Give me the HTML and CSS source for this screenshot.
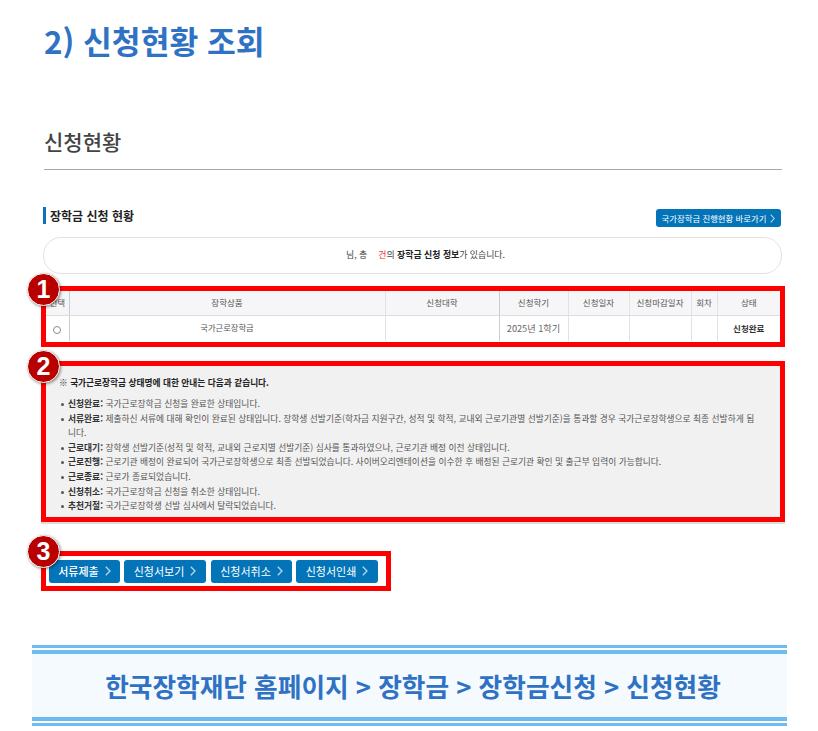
FILE: index.html
```html
<!DOCTYPE html>
<html lang="ko">
<head>
<meta charset="utf-8">
<title>신청현황 조회</title>
<link rel="stylesheet" href="styles.css">
</head>
<body>
<div class="page">
  <h1 class="title">2) 신청현황 조회</h1>
  <h2 class="heading">신청현황</h2>
  <div class="section-head">
    <h3 class="section-title">장학금 신청 현황</h3>
    <a class="btn btn-small">국가장학금 진행현황 바로가기<svg class="chev" width="5" height="9" viewBox="0 0 5 9"><path d="M.7.7 4.2 4.5.7 8.3" fill="none" stroke="#b9d7ee" stroke-width="1.1"/></svg></a>
  </div>
  <div class="notice"><span>님, 총</span><span class="red">건</span><span>의 <b>장학금 신청 정보</b>가 있습니다.</span></div>

  <div class="frame table-frame">
    <span class="badge badge-one">1</span>
    <table class="grid">
      <colgroup>
        <col class="c1"><col class="c2"><col class="c3"><col class="c4"><col class="c5"><col class="c6"><col class="c7"><col class="c8">
      </colgroup>
      <thead>
        <tr><th>선택</th><th>장학상품</th><th>신청대학</th><th>신청학기</th><th>신청일자</th><th>신청마감일자</th><th>회차</th><th>상태</th></tr>
      </thead>
      <tbody>
        <tr><td><span class="radio"></span></td><td class="up">국가근로장학금</td><td></td><td class="term">2025년 1학기</td><td></td><td></td><td></td><td class="strong">신청완료</td></tr>
      </tbody>
    </table>
  </div>

  <div class="frame info-frame">
    <span class="badge badge-two">2</span>
    <p class="info-lead">※ <b>국가근로장학금 상태명에 대한 안내는 다음과 같습니다.</b></p>
    <ul class="info-list">
      <li><b>신청완료:</b> 국가근로장학금 신청을 완료한 상태입니다.</li>
      <li><b>서류완료:</b> 제출하신 서류에 대해 확인이 완료된 상태입니다. 장학생 선발기준(학자금 지원구간, 성적 및 학적, 교내외 근로기관별 선발기준)을 통과할 경우 국가근로장학생으로 최종 선발하게 됩니다.</li>
      <li><b>근로대기:</b> 장학생 선발기준(성적 및 학적, 교내외 근로지별 선발기준) 심사를 통과하였으나, 근로기관 배정 이전 상태입니다.</li>
      <li><b>근로진행:</b> 근로기관 배정이 완료되어 국가근로장학생으로 최종 선발되었습니다. 사이버오리엔테이션을 이수한 후 배정된 근로기관 확인 및 출근부 입력이 가능합니다.</li>
      <li><b>근로종료:</b> 근로가 종료되었습니다.</li>
      <li><b>신청취소:</b> 국가근로장학금 신청을 취소한 상태입니다.</li>
      <li><b>추천거절:</b> 국가근로장학생 선발 심사에서 탈락되었습니다.</li>
    </ul>
  </div>

  <div class="frame btn-frame">
    <span class="badge badge-three">3</span>
    <a class="btn btn-big btn-first">서류제출<svg class="chev" width="6" height="10" viewBox="0 0 6 10"><path d="M.8.8 5 5 .8 9.2" fill="none" stroke="#b9d7ee" stroke-width="1.3"/></svg></a>
    <a class="btn btn-big btn-wide">신청서보기<svg class="chev" width="6" height="10" viewBox="0 0 6 10"><path d="M.8.8 5 5 .8 9.2" fill="none" stroke="#b9d7ee" stroke-width="1.3"/></svg></a>
    <a class="btn btn-big btn-mid">신청서취소<svg class="chev" width="6" height="10" viewBox="0 0 6 10"><path d="M.8.8 5 5 .8 9.2" fill="none" stroke="#b9d7ee" stroke-width="1.3"/></svg></a>
    <a class="btn btn-big btn-wide">신청서인쇄<svg class="chev" width="6" height="10" viewBox="0 0 6 10"><path d="M.8.8 5 5 .8 9.2" fill="none" stroke="#b9d7ee" stroke-width="1.3"/></svg></a>
  </div>

  <div class="banner">
    <div class="banner-inner">한국장학재단 홈페이지 &gt; 장학금 &gt; 장학금신청 &gt; 신청현황</div>
  </div>
</div>
</body>
</html>
```

FILE: styles.css
```css
* { box-sizing: border-box; }
html, body { margin: 0; padding: 0; background: #fff; }
body { font-family: "Noto Sans CJK KR", "Noto Sans", sans-serif; color: #333; }
.page { width: 818px; height: 731px; padding: 20px 0 0 41px; overflow: hidden; }

.title { margin: 0 0 0 3px; font-size: 31.3px; line-height: 42px; font-weight: 700; color: #2f72c4; }
.heading { margin: 59px 0 0 3px; width: 738px; height: 49px; font-size: 21px; line-height: 40px; font-weight: 500; color: #444; border-bottom: 1px solid #a9a9a9; }

.section-head { display: flex; justify-content: space-between; align-items: flex-start; width: 738px; margin: 37px 0 0 2px; height: 30px; }
.section-title { margin: 0; height: 17px; padding-left: 4px; border-left: 3px solid #0f72b8; font-size: 12px; line-height: 17px; font-weight: 700; color: #222; }

.btn { display: inline-flex; align-items: center; background: #0474b9; color: #fff; border-radius: 3px; white-space: nowrap; }
.btn-small { width: 125px; height: 18px; margin-top: 2px; font-size: 8.4px; justify-content: center; gap: 4px; }

.notice { display: flex; justify-content: center; align-items: center; width: 739px; height: 37px; margin-left: 2px; padding: 0 0 3px 26px; border: 1px solid #e2e2e2; border-radius: 18px; font-size: 8.9px; color: #444; }
.notice span { display: inline-block; }
.notice b { color: #222; }
.notice .red { color: #e33; margin-left: 11px; }

.frame { position: relative; width: 744px; border: 5px solid #f00; }
.badge { position: absolute; left: -19px; width: 33px; height: 33px; border-radius: 50%; background: #b80000; border: 1px solid #fff; box-shadow: 1px 1px 3px rgba(0,0,0,.45); color: #fff; font: 700 25px/31px "Liberation Sans", sans-serif; text-align: center; }
.badge-one { top: -18px; }
.badge-two { top: -16px; }
.badge-three { top: -21px; }

.table-frame { height: 61px; margin-top: 12px; }
.grid { width: 734px; table-layout: fixed; border-collapse: collapse; font-size: 8.5px; color: #555; }
.c1 { width: 23px; } .c2 { width: 316px; } .c3 { width: 114px; } .c4 { width: 69px; }
.c5 { width: 61px; } .c6 { width: 62px; } .c7 { width: 26px; } .c8 { width: 63px; }
.grid th { height: 24px; padding: 0 0 2px; background: #f6f6f8; font-weight: 400; border-bottom: 1px solid #ddd; border-left: 1px solid #e2e2e2; overflow: hidden; white-space: nowrap; }
.grid td { height: 26px; padding: 0; text-align: center; border-left: 1px solid #e2e2e2; }
.grid th:first-child, .grid td:first-child { border-left: 0; }
.grid th:nth-child(2), .grid td:nth-child(2), .grid th:nth-child(4), .grid td:nth-child(4) { border-left: 1px solid #ccc; }
.up { vertical-align: top; padding-top: 5px !important; line-height: 12px; font-size: 8.3px; }
.term { font-size: 9.2px; color: #666; }
.strong { font-weight: 700; color: #333; }
.radio { display: inline-block; width: 8px; height: 8px; border: 1px solid #8a8a8a; border-radius: 50%; vertical-align: middle; }

.info-frame { height: 161px; margin-top: 14px; background: #f1f1f1; padding: 10px 0 0 13px; box-shadow: 0 2px 0 #ddd; }
.info-lead { margin: 0; font-size: 8.7px; line-height: 14px; color: #333; }
.info-lead b { color: #222; }
.info-list { list-style: none; margin: 7px 0 0; padding: 0; width: 700px; font-size: 8.74px; line-height: 14.6px; color: #555; }
.info-list li { position: relative; padding-left: 9px; }
.info-list li::before { content: ""; position: absolute; left: 2px; top: 6px; width: 3px; height: 3px; border-radius: 50%; background: #555; }
.info-list b { font-weight: 700; color: #333; }

.btn-frame { display: flex; align-items: center; gap: 4px; width: 350px; height: 40px; margin-top: 29px; padding-left: 3px; }
.btn-big { height: 23px; gap: 6px; font-size: 11px; justify-content: center; }
.btn-first { width: 71px; font-weight: 500; }
.btn-wide { width: 82px; }
.btn-mid { width: 81px; margin-left: 1px; }

.banner { width: 755px; height: 81px; margin: 54px 0 0 -9px; border-top: 3px solid #6cbcf2; border-bottom: 3px solid #6cbcf2; padding: 2px 0; background: #fff; }
.banner-inner { height: 71px; border-top: 4px solid #6cbcf2; border-bottom: 4px solid #6cbcf2; background: #f5faff; color: #2f72c4; font-size: 25.7px; font-weight: 700; line-height: 63px; text-align: center; padding-left: 7px; white-space: nowrap; }
```
